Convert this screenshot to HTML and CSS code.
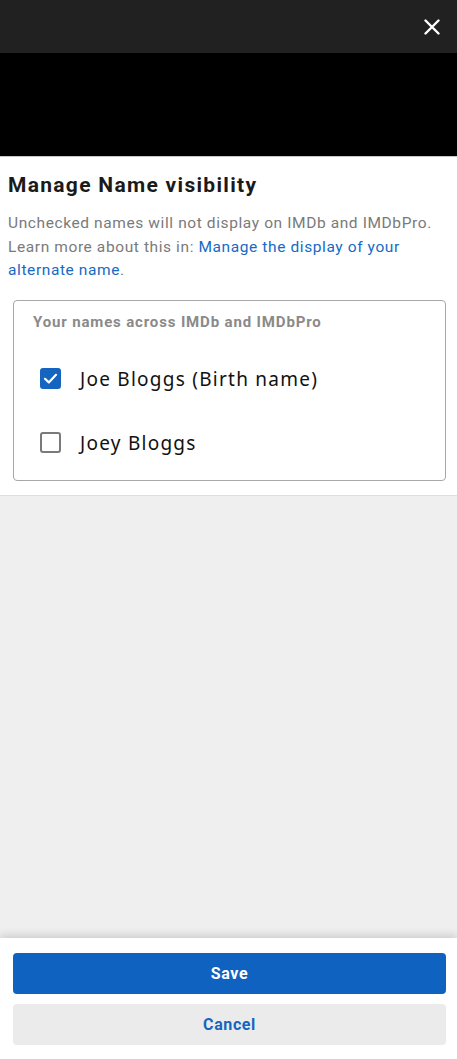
FILE: index.html
```html
<!DOCTYPE html>
<html lang="en">
<head>
<meta charset="utf-8">
<title>Manage Name visibility</title>
<link rel="stylesheet" href="styles.css">
</head>
<body>
<div class="page">
  <header class="topbar">
    <button class="close" aria-label="Close">
      <svg width="16" height="16" viewBox="0 0 16 16"><path d="M1.5 1.5 L14.5 14.5 M14.5 1.5 L1.5 14.5" stroke="#fff" stroke-width="2.4" stroke-linecap="round"/></svg>
    </button>
  </header>
  <div class="media"></div>
  <section class="panel">
    <h1 class="title">Manage Name visibility</h1>
    <p class="desc">Unchecked names will not display on IMDb and IMDbPro. Learn more about this in: <a class="link" href="#">Manage the display of your alternate name</a>.</p>
    <div class="box">
      <div class="box-head">Your names across IMDb and IMDbPro</div>
      <label class="row">
        <span class="cb checked">
          <svg width="21" height="21" viewBox="0 0 21 21"><path d="M5 10.8 L8.8 14.4 L16 6.8" fill="none" stroke="#fff" stroke-width="2.2" stroke-linecap="round" stroke-linejoin="round"/></svg>
        </span>
        <span class="name">Joe Bloggs (Birth name)</span>
      </label>
      <label class="row">
        <span class="cb"></span>
        <span class="name">Joey Bloggs</span>
      </label>
    </div>
  </section>
  <div class="filler"></div>
  <footer class="footer">
    <button class="btn save">Save</button>
    <button class="btn cancel">Cancel</button>
  </footer>
</div>
</body>
</html>
```
FILE: styles.css
```css
* { box-sizing: border-box; }
html, body { margin: 0; padding: 0; }
body {
  background: #efefef;
  font-family: Roboto, "Liberation Sans", Arial, sans-serif;
}
.page {
  display: flex;
  flex-direction: column;
  min-height: 1059px;
}
.topbar {
  height: 53px;
  background: #212121;
  display: flex;
  justify-content: flex-end;
  align-items: center;
  padding-right: 17px;
}
.close {
  background: none;
  border: 0;
  padding: 0;
  width: 16px;
  height: 16px;
  display: block;
  margin-top: 1px;
}
.close svg { display: block; }
.media {
  height: 104px;
  background: #000;
  border-bottom: 1px solid #c8c8c8;
}
.panel {
  background: #fff;
  padding: 14px 11px 14px 0;
  border-bottom: 1px solid #dedede;
}
.title {
  margin: 0 0 13px 8px;
  font-size: 21px;
  line-height: 28px;
  font-weight: 700;
  letter-spacing: 1.3px;
  color: #1a1a1a;
}
.desc {
  margin: 0 0 17px 8px;
  font-size: 15.5px;
  line-height: 23.5px;
  letter-spacing: 0.6px;
  color: #7a7a7a;
}
.link {
  color: #176ac4;
  text-decoration: none;
}
.box {
  margin-left: 13px;
  border: 1px solid #a8a8a8;
  border-radius: 4px;
  padding: 11px 0 5px 19px;
}
.box-head {
  font-size: 15px;
  line-height: 20px;
  font-weight: 700;
  letter-spacing: 0.85px;
  color: #8a8a8a;
  margin-bottom: 15px;
}
.row {
  display: flex;
  align-items: center;
  height: 64px;
  padding-left: 7px;
}
.cb {
  width: 21px;
  height: 21px;
  border: 2px solid #7a7a7a;
  border-radius: 3px;
  flex: none;
  display: flex;
  align-items: center;
  justify-content: center;
}
.cb.checked {
  background: #1565c0;
  border: 0;
}
.cb svg { display: block; }
.name {
  margin-left: 19px;
  font-family: "Noto Sans", "Open Sans", sans-serif;
  font-size: 19px;
  letter-spacing: 1.25px;
  color: #111;
}
.filler { flex: 1; }
.footer {
  background: #fff;
  box-shadow: 0 -3px 8px rgba(0,0,0,0.14);
  padding: 15px 11px 14px 13px;
  display: flex;
  flex-direction: column;
  gap: 10px;
}
.btn {
  height: 41px;
  border: 0;
  border-radius: 4px;
  font-family: Roboto, "Liberation Sans", Arial, sans-serif;
  font-size: 16px;
  font-weight: 700;
  letter-spacing: 0.6px;
  width: 100%;
}
.save {
  background: #1062c0;
  color: #fff;
}
.cancel {
  background: #ebebeb;
  color: #1565c0;
}
```
